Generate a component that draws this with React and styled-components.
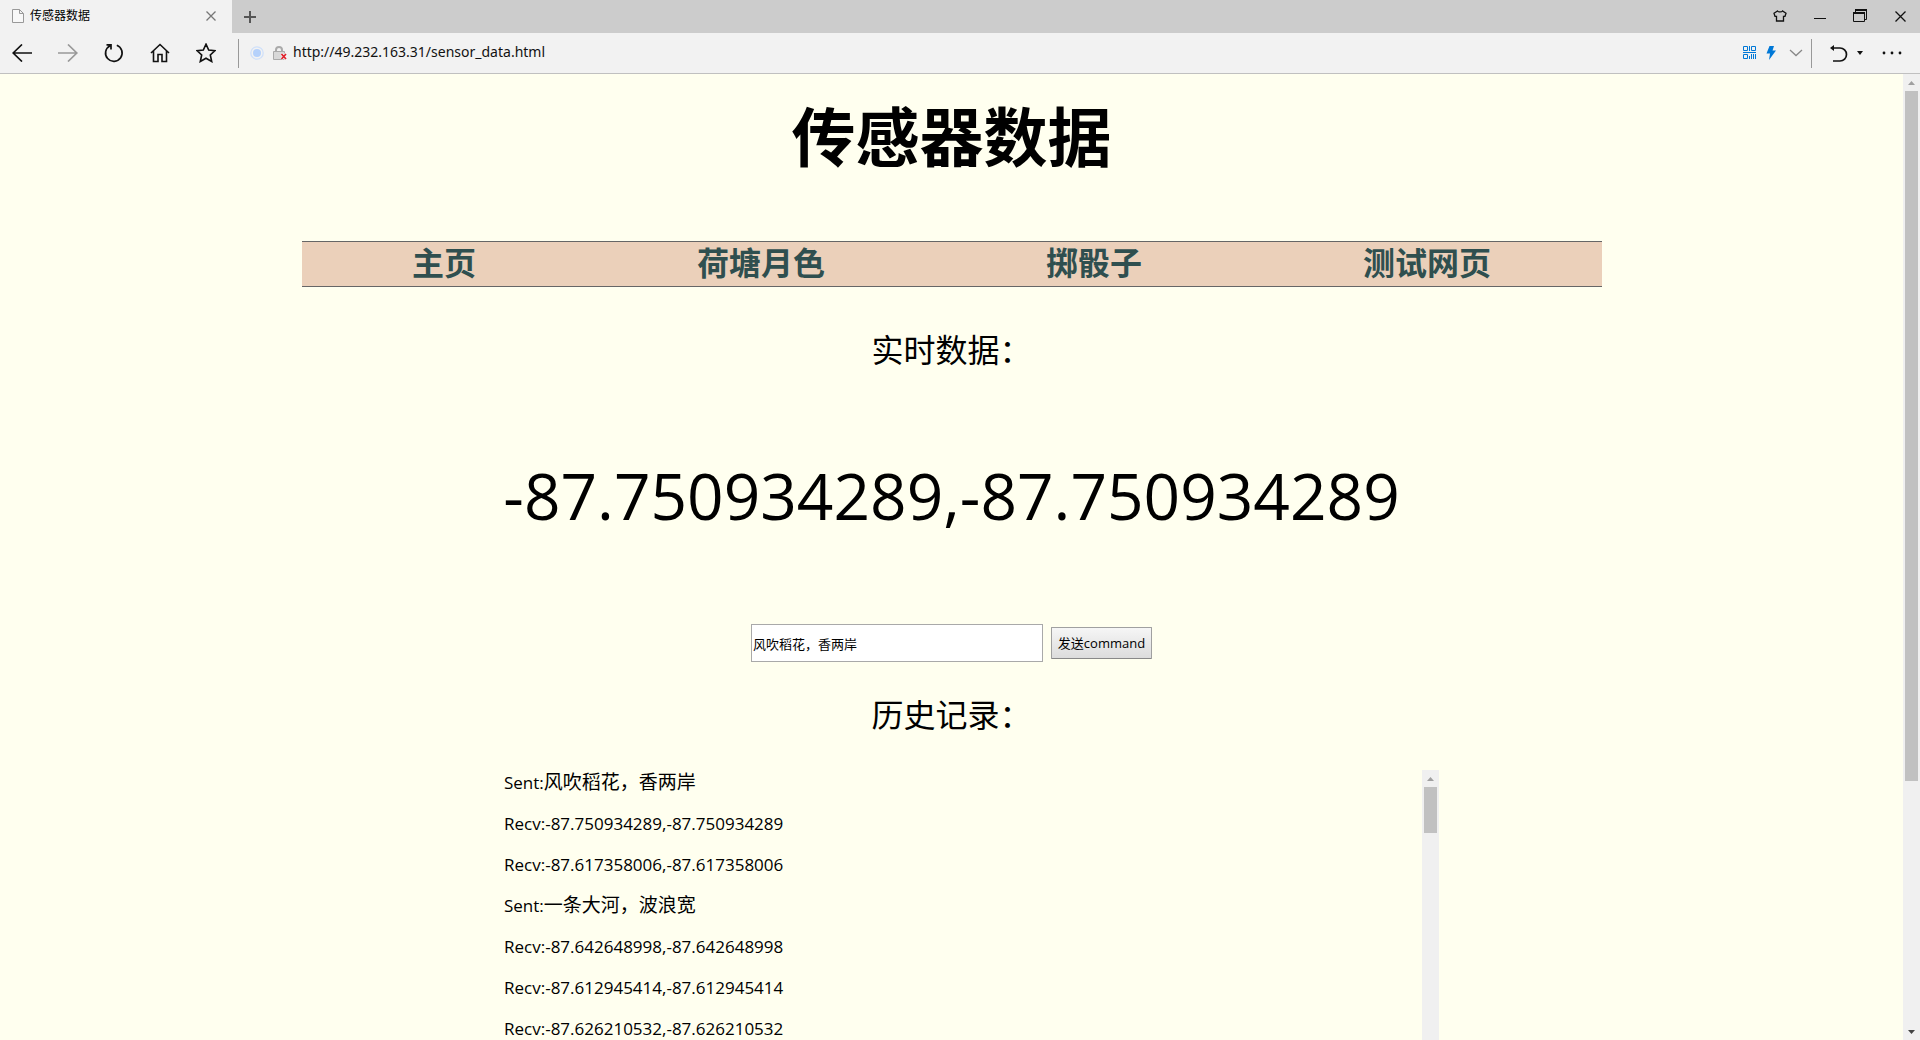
import React, { useState } from "react";
import styled, { createGlobalStyle } from "styled-components";

const latin = '"Open Sans", "Noto Sans", "Noto Sans CJK SC", sans-serif';
const cjk = '"Noto Sans CJK SC", "Noto Sans", sans-serif';

const GlobalStyle = createGlobalStyle`
  *, *::before, *::after { box-sizing: border-box; }
  body { margin: 0; background: #ffffef; color: #000; font-family: ${latin}; }
  svg { display: block; }
`;

const Window = styled.div`
  display: flex;
  flex-direction: column;
  height: 100vh;
  overflow: hidden;
`;

const TabBar = styled.header`
  display: flex;
  flex: none;
  height: 33px;
  background: #ccc;
`;

const Tab = styled.div`
  display: flex;
  align-items: center;
  gap: 6px;
  width: 232px;
  padding: 0 9px 2px 12px;
  background: #f2f2f2;
`;

const TabTitle = styled.span`
  flex: 1;
  padding-bottom: 2px;
  font: 12px/20px ${cjk};
`;

const IconButton = styled.button`
  display: flex;
  align-items: center;
  justify-content: center;
  flex: none;
  width: ${(p) => p.$width || 44}px;
  height: 100%;
  padding: 0;
  border: 0;
  background: none;
  color: #111;
`;

const WindowControls = styled.div`
  display: flex;
  margin-left: auto;
  padding-bottom: 1px;
`;

const Toolbar = styled.nav`
  display: flex;
  flex: none;
  align-items: center;
  height: 41px;
  padding-right: 6px;
  background: #f2f2f2;
  border-bottom: 1px solid #c0c0c0;
`;

const NavButtons = styled.div`
  display: flex;
  gap: 2px;
  height: 100%;
`;

const Divider = styled.span`
  flex: none;
  width: 1px;
  height: 29px;
  background: #999;
  margin: 0 ${(p) => p.$after}px 0 ${(p) => p.$before || 0}px;
`;

const SiteStatus = styled.div`
  display: flex;
  align-items: center;
  gap: 9px;
  margin-right: 5px;
`;

const Address = styled.input`
  flex: 1;
  min-width: 0;
  height: 28px;
  padding: 0 0 4px;
  border: 0;
  outline: 0;
  background: none;
  color: #111;
  font: 14px/20px "Noto Sans", ${latin};
`;

const Viewport = styled.div`
  display: flex;
  flex: 1;
  min-height: 0;
`;

const Page = styled.main`
  display: flex;
  flex-direction: column;
  align-items: center;
  flex: 1;
  min-width: 0;
  overflow: hidden;
`;

const Title = styled.h1`
  margin: 15px 0 0;
  font: bold 64px/88px ${cjk};
`;

const Menu = styled.nav`
  display: flex;
  justify-content: space-around;
  flex: none;
  width: 100%;
  max-width: 1300px;
  margin-top: 64px;
  padding-bottom: 6px;
  background: #ebd0ba;
  border: solid #666;
  border-width: 1px 0;
`;

const MenuLink = styled.a`
  color: #2f4f4f;
  font: bold 32px/38px ${cjk};
  text-decoration: none;
`;

const SectionTitle = styled.h2`
  margin: ${(p) => p.$top}px 0 0;
  font: 400 32px/44px ${cjk};
`;

const Reading = styled.output`
  margin-top: 76px;
  font: 64px/100px ${latin};
`;

const CommandForm = styled.form`
  display: flex;
  align-items: center;
  gap: 8px;
  margin-top: 78px;
`;

const CommandInput = styled.input`
  width: 292px;
  height: 38px;
  padding: 0 1px;
  border: 1px solid #a9a9a9;
  background: #fff;
  font: 13px/20px ${cjk};
`;

const SendButton = styled.button`
  width: 101px;
  height: 32px;
  padding: 0;
  border: 1px solid #a0a0a0;
  border-bottom-color: #888;
  border-radius: 1px;
  background: linear-gradient(#f6f6f6, #dcdcdc);
  font: 13px/20px ${latin};
  white-space: nowrap;
`;

const History = styled.section`
  display: flex;
  flex: none;
  width: 75%;
  max-width: 975px;
  height: 500px;
  margin-top: 35px;
  padding-left: 40px;
`;

const HistoryList = styled.ul`
  flex: 1;
  margin: 0;
  padding: 0;
  list-style: none;
`;

const HistoryItem = styled.li`
  height: 41px;
  font: 17px/26px ${latin};
`;

const Phrase = styled.span`
  font: 19px/20px ${cjk};
`;

const ScrollTrack = styled.div`
  display: flex;
  flex-direction: column;
  flex: none;
  align-items: center;
  width: 17px;
  background: #f0f0f0;
`;

const ScrollArrow = styled.button`
  display: flex;
  align-items: center;
  justify-content: center;
  flex: none;
  width: 17px;
  height: 17px;
  padding: 0;
  border: 0;
  background: none;
  color: ${(p) => (p.$dim ? "#a0a0a0" : "#444")};
`;

const ScrollThumb = styled.div`
  width: 13px;
  height: ${(p) => p.$size};
  background: #c1c1c1;
`;

const ScrollSpace = styled.div`
  flex: 1;
`;

function Icon({ w, h, children, stroke = "currentColor", width = 1.5 }) {
  return (
    <svg width={w} height={h} viewBox={`0 0 ${w} ${h}`} fill="none" stroke={stroke} strokeWidth={width} aria-hidden="true">
      {children}
    </svg>
  );
}

const icons = {
  page: <Icon w={12} h={14} stroke="#999" width={1}><path d="M.5.5h7l4 4v9H.5zM7.5.5v4h4" fill="#f8f8f8" /></Icon>,
  closeTab: <Icon w={10} h={10} stroke="#777" width={1.3}><path d="M.5.5l9 9M9.5.5l-9 9" /></Icon>,
  plus: <Icon w={12} h={12} stroke="#555" width={2}><path d="M6 0v12M0 6h12" /></Icon>,
  shirt: <Icon w={14} h={12} width={1.3}><path d="M4.500 1L1 3.300l1 3h1.500V11h7V6.300H12l1-3L9.500 1C8.800 2.200 5.200 2.200 4.500 1z" /></Icon>,
  minimize: <Icon w={12} h={12} width={1}><path d="M0 8.500h12" /></Icon>,
  restore: <Icon w={14} h={14} width={1}><path d="M.5 4h11v8.500H.5zM2.500 3V1h11v9.500h-2" /><path d="M0 4h12M2 1h12" strokeWidth={2} /></Icon>,
  close: <Icon w={11} h={11} width={1.3}><path d="M.5.5l10 10M10.500.5l-10 10" /></Icon>,
  back: <Icon w={20} h={18} width={1.7}><path d="M20 9H1M10 .5L1.200 9l8.800 8.500" /></Icon>,
  forward: <Icon w={20} h={18} stroke="#999" width={1.7}><path d="M0 9h19M10 .5L18.800 9 10 17.500" /></Icon>,
  reload: <Icon w={20} h={20} width={1.7}><path d="M12.800 2.300A8.300 8.300 0 1 1 6 2.700M2.500 1.800h4.500V6.500" /></Icon>,
  home: <Icon w={20} h={20} width={1.6}><path d="M1 10l9-8.500 9 8.500M3.500 8v10.500H8v-7h4v7h4.500V8" /></Icon>,
  star: <Icon w={20} h={20} width={1.6}><path d="M10 1.200l2.700 5.800 6.300.7-4.700 4.300 1.400 6.500L10 15.200l-5.700 3.300L5.700 12 1 7.700 7.300 7z" /></Icon>,
  site: <Icon w={14} h={14} stroke="#cfe0fa" width={1.3}><circle cx="7" cy="7" r="6.200" /><circle cx="7" cy="7" r="4" fill="#b5d1fb" stroke="none" /></Icon>,
  lock: (
    <Icon w={15} h={14} stroke="#aaa" width={1}>
      <path d="M3 6V4a3 3 0 0 1 6 0v2" strokeWidth={2} />
      <path d="M.5 5.500h11v8H.5z" fill="#d8d8d8" />
      <path d="M8.500 8l4.500 5M13 8l-4.500 5" stroke="#f2f2f2" strokeWidth={3} />
      <path d="M8.500 8l4.500 5M13 8l-4.500 5" stroke="#e0202a" strokeWidth={1.7} />
    </Icon>
  ),
  qr: <Icon w={14} h={14} stroke="#0078d7" width={1}><path d="M.5.5h4v4h-4zM8.500.5h4v4h-4zM.5 8.500h4v4h-4zM6.500 0v5M0 6.500h13M6.500 10v3M8.500 8v5M10.500 8v5M12.500 8v5" /></Icon>,
  bolt: <Icon w={10} h={14} stroke="none"><path d="M3.500 0h4.500L6.500 4.500H10L3 14l1-6.500H.5z" fill="#0078d7" /></Icon>,
  chevron: <Icon w={14} h={8} stroke="#888" width={1.3}><path d="M1 1l6 5.500L13 1" /></Icon>,
  undo: <Icon w={18} h={18} width={1.7}><path d="M2 4h8a6.400 6.400 0 0 1 0 13H3" /><path d="M0 4l4-3v6z" fill="currentColor" stroke="none" /></Icon>,
  caret: <Icon w={6} h={4} stroke="none"><path d="M0 0h6L3 4z" fill="currentColor" /></Icon>,
  dots: <Icon w={20} h={4} stroke="none"><circle cx="2" cy="2" r="1.400" fill="currentColor" /><circle cx="10" cy="2" r="1.400" fill="currentColor" /><circle cx="18" cy="2" r="1.400" fill="currentColor" /></Icon>,
  up: <Icon w={7} h={4} stroke="none"><path d="M3.500 0L7 4H0z" fill="currentColor" /></Icon>,
  down: <Icon w={7} h={4} stroke="none"><path d="M0 0h7L3.500 4z" fill="currentColor" /></Icon>,
};

const navButtons = [
  ["后退", "back"],
  ["前进", "forward"],
  ["刷新", "reload"],
  ["主页", "home"],
  ["收藏", "star"],
];

const windowButtons = [
  ["皮肤", "shirt"],
  ["最小化", "minimize"],
  ["还原", "restore"],
  ["关闭", "close"],
];

const menu = ["主页", "荷塘月色", "掷骰子", "测试网页"];

const history = [
  { type: "Sent", value: "风吹稻花，香两岸" },
  { type: "Recv", value: "-87.750934289,-87.750934289" },
  { type: "Recv", value: "-87.617358006,-87.617358006" },
  { type: "Sent", value: "一条大河，波浪宽" },
  { type: "Recv", value: "-87.642648998,-87.642648998" },
  { type: "Recv", value: "-87.612945414,-87.612945414" },
  { type: "Recv", value: "-87.626210532,-87.626210532" },
];

function Scrollbar({ thumb }) {
  return (
    <ScrollTrack>
      <ScrollArrow $dim aria-label="向上滚动">{icons.up}</ScrollArrow>
      <ScrollThumb $size={thumb} />
      <ScrollSpace />
      <ScrollArrow aria-label="向下滚动">{icons.down}</ScrollArrow>
    </ScrollTrack>
  );
}

export default function App() {
  const [address, setAddress] = useState("http://49.232.163.31/sensor_data.html");
  const [command, setCommand] = useState("风吹稻花，香两岸");

  return (
    <Window>
      <GlobalStyle />
      <TabBar>
        <Tab>
          {icons.page}
          <TabTitle>传感器数据</TabTitle>
          <IconButton $width={24} aria-label="关闭标签页">{icons.closeTab}</IconButton>
        </Tab>
        <IconButton $width={36} aria-label="新标签页">{icons.plus}</IconButton>
        <WindowControls>
          {windowButtons.map(([label, icon]) => (
            <IconButton key={icon} $width={40} aria-label={label}>{icons[icon]}</IconButton>
          ))}
        </WindowControls>
      </TabBar>
      <Toolbar>
        <NavButtons>
          {navButtons.map(([label, icon]) => (
            <IconButton key={icon} aria-label={label} disabled={icon === "forward"}>{icons[icon]}</IconButton>
          ))}
        </NavButtons>
        <Divider $before={10} $after={11} />
        <SiteStatus>
          {icons.site}
          {icons.lock}
        </SiteStatus>
        <Address aria-label="地址" value={address} onChange={(e) => setAddress(e.target.value)} />
        <IconButton $width={22} aria-label="二维码">{icons.qr}</IconButton>
        <IconButton $width={20} aria-label="极速模式">{icons.bolt}</IconButton>
        <IconButton $width={30} aria-label="展开地址栏">{icons.chevron}</IconButton>
        <Divider $after={16} />
        <IconButton $width={22} aria-label="恢复">{icons.undo}</IconButton>
        <IconButton $width={20} aria-label="恢复列表">{icons.caret}</IconButton>
        <IconButton aria-label="更多">{icons.dots}</IconButton>
      </Toolbar>
      <Viewport>
        <Page>
          <Title>传感器数据</Title>
          <Menu>
            {menu.map((name) => (
              <MenuLink key={name} href="#">{name}</MenuLink>
            ))}
          </Menu>
          <SectionTitle $top={39}>实时数据：</SectionTitle>
          <Reading>-87.750934289,-87.750934289</Reading>
          <CommandForm onSubmit={(e) => e.preventDefault()}>
            <CommandInput aria-label="command" value={command} onChange={(e) => setCommand(e.target.value)} />
            <SendButton type="submit">发送command</SendButton>
          </CommandForm>
          <SectionTitle $top={29}>历史记录：</SectionTitle>
          <History>
            <HistoryList>
              {history.map(({ type, value }) => (
                <HistoryItem key={value}>
                  {type}:{type === "Sent" ? <Phrase>{value}</Phrase> : value}
                </HistoryItem>
              ))}
            </HistoryList>
            <Scrollbar thumb="46px" />
          </History>
        </Page>
        <Scrollbar thumb="calc((100% - 34px) * 0.74)" />
      </Viewport>
    </Window>
  );
}
